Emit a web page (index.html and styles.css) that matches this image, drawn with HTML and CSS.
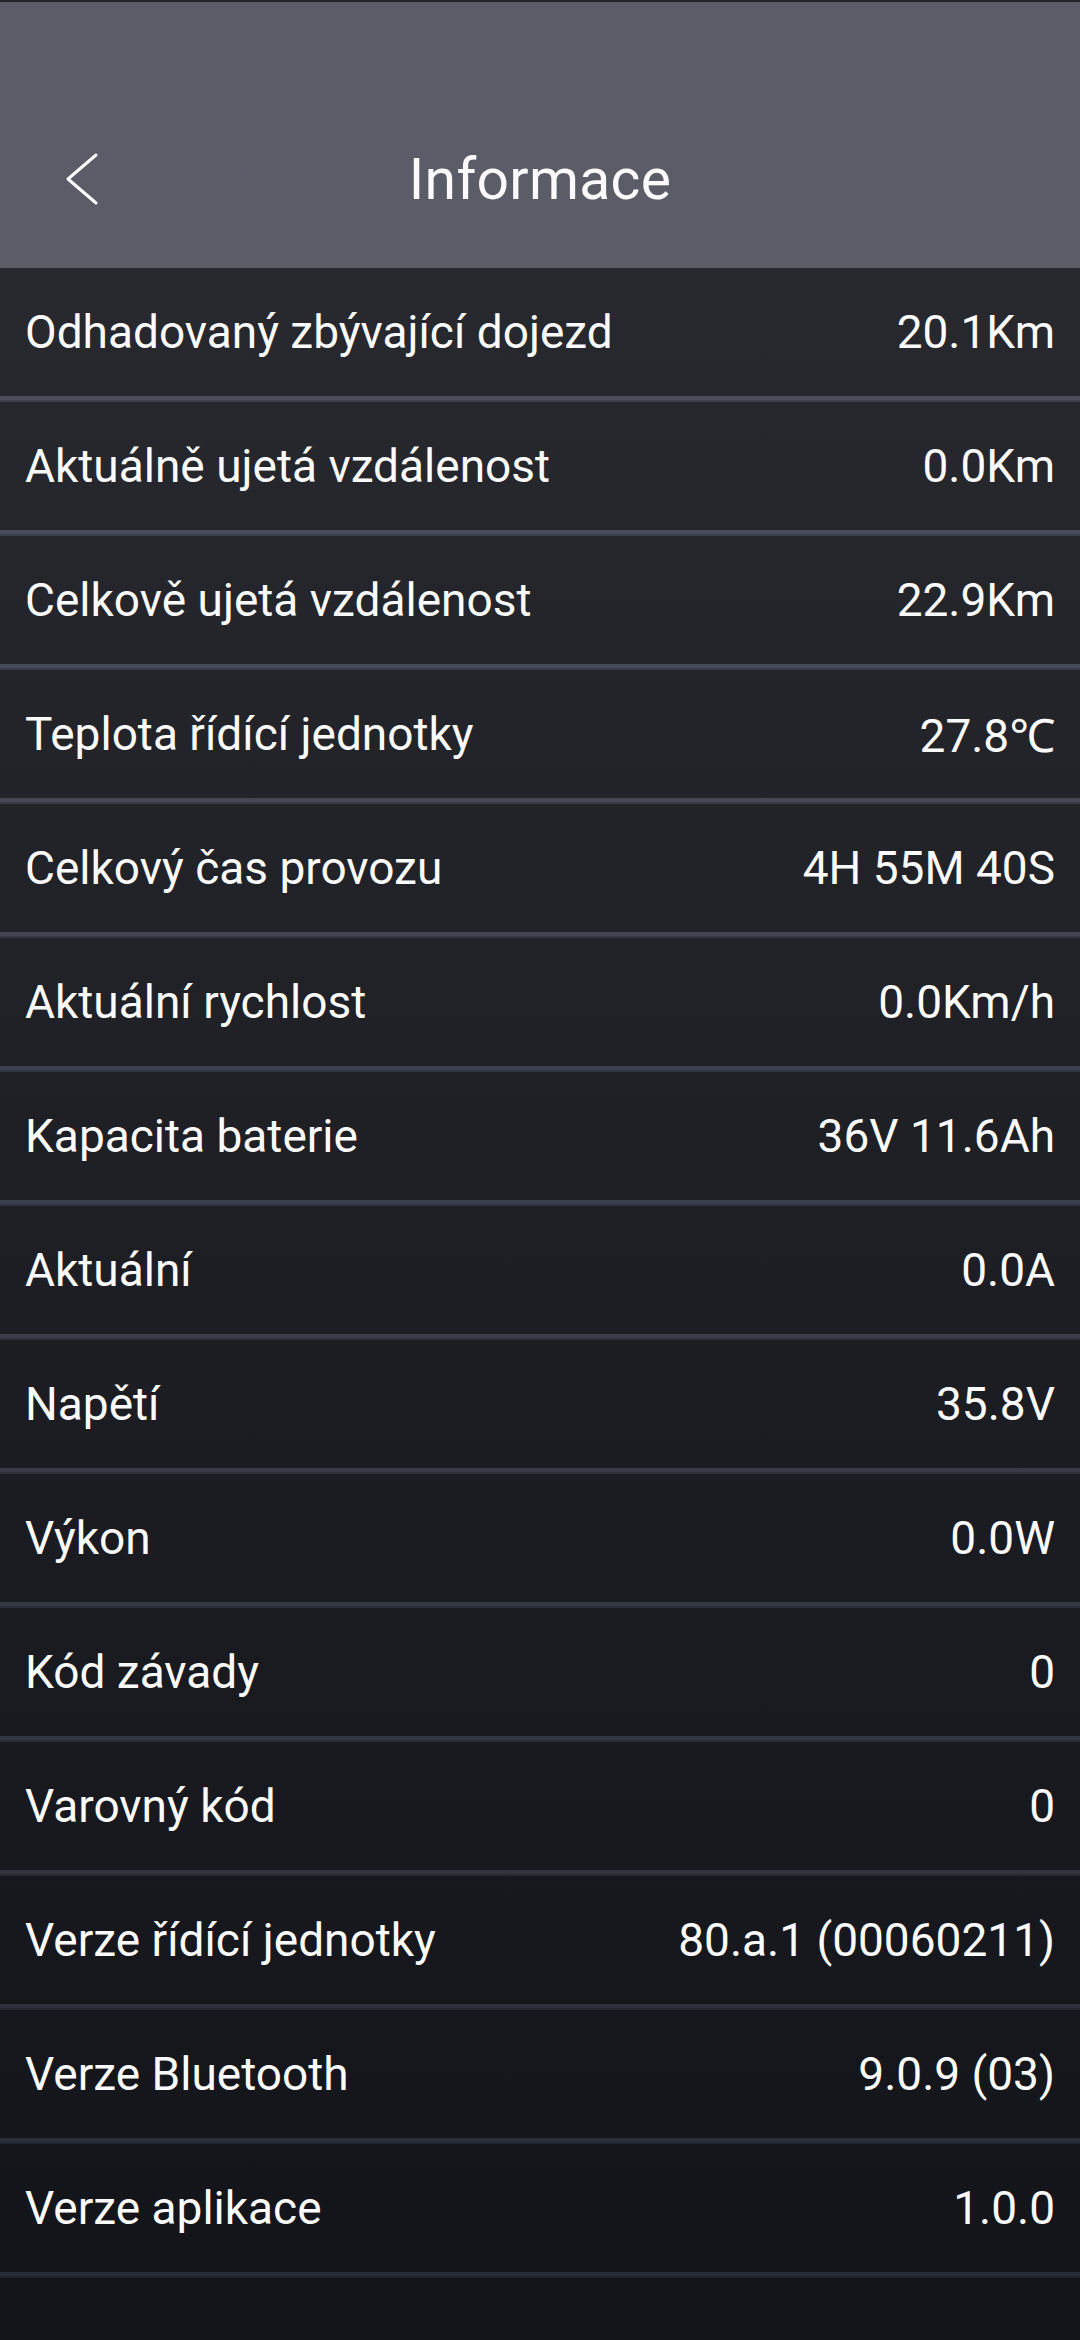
FILE: index.html
```html
<!DOCTYPE html>
<html lang="cs">
<head>
    <meta charset="UTF-8">
    <meta name="viewport" content="width=device-width, initial-scale=1.0">
    <title>Informace</title>
    <link rel="stylesheet" href="styles.css">
</head>
<body>
    <header class="topbar">
        <button class="back" aria-label="Zpět">
            <svg width="40" height="60" viewBox="0 0 40 60">
                <polyline points="34,5 6,29 34,53" fill="none" stroke="#fff" stroke-width="3" stroke-linecap="round" stroke-linejoin="round"/>
            </svg>
        </button>
        <h1 class="title">Informace</h1>
    </header>

    <div class="info-list">
        <div class="row"><span class="label">Odhadovaný zbývající dojezd</span><span class="value">20.1Km</span></div>
        <div class="row"><span class="label">Aktuálně ujetá vzdálenost</span><span class="value">0.0Km</span></div>
        <div class="row"><span class="label">Celkově ujetá vzdálenost</span><span class="value">22.9Km</span></div>
        <div class="row"><span class="label">Teplota řídící jednotky</span><span class="value">27.8℃</span></div>
        <div class="row"><span class="label">Celkový čas provozu</span><span class="value">4H 55M 40S</span></div>
        <div class="row"><span class="label">Aktuální rychlost</span><span class="value">0.0Km/h</span></div>
        <div class="row"><span class="label">Kapacita baterie</span><span class="value">36V 11.6Ah</span></div>
        <div class="row"><span class="label">Aktuální</span><span class="value">0.0A</span></div>
        <div class="row"><span class="label">Napětí</span><span class="value">35.8V</span></div>
        <div class="row"><span class="label">Výkon</span><span class="value">0.0W</span></div>
        <div class="row"><span class="label">Kód závady</span><span class="value">0</span></div>
        <div class="row"><span class="label">Varovný kód</span><span class="value">0</span></div>
        <div class="row"><span class="label">Verze řídící jednotky</span><span class="value">80.a.1 (00060211)</span></div>
        <div class="row"><span class="label">Verze Bluetooth</span><span class="value">9.0.9 (03)</span></div>
        <div class="row"><span class="label">Verze aplikace</span><span class="value">1.0.0</span></div>
    </div>
</body>
</html>
```

FILE: styles.css
```css
html {
    background: #131419;
}
body {
    margin: 0;
    min-height: 2340px;
    font-family: Roboto, "Noto Sans", sans-serif;
    color: #fafafa;
    background: linear-gradient(180deg, #5a5d68 0px, #5a5c66 268px, #28292f 268px, #1d1e24 1300px, #131419 2340px);
}
.topbar {
    height: 268px;
    box-sizing: border-box;
    border-top: 2px solid #23252c;
    padding-top: 88px;
    display: flex;
    align-items: center;
    justify-content: center;
    position: relative;
}
.back {
    position: absolute;
    left: 62px;
    top: 148px;
    background: none;
    border: none;
    padding: 0;
    cursor: pointer;
}
.back svg {
    display: block;
}
.title {
    margin: 0;
    font-size: 57px;
    font-weight: 400;
    letter-spacing: 0.3px;
}
.info-list {
    display: flex;
    flex-direction: column;
}
.row {
    height: 128px;
    padding: 0 25px 0 25px;
    display: flex;
    align-items: center;
    justify-content: space-between;
    font-size: 46px;
    border-bottom: 6px solid transparent;
    position: relative;
}
.row::after {
    content: "";
    position: absolute;
    left: 0;
    right: 0;
    bottom: -6px;
    height: 6px;
    background: linear-gradient(180deg, #535765 0px, #3a3e4a 1300px, #262b36 2340px) fixed;
    box-shadow: inset 0 -2px 0 rgba(0, 0, 0, 0.18);
}
```
